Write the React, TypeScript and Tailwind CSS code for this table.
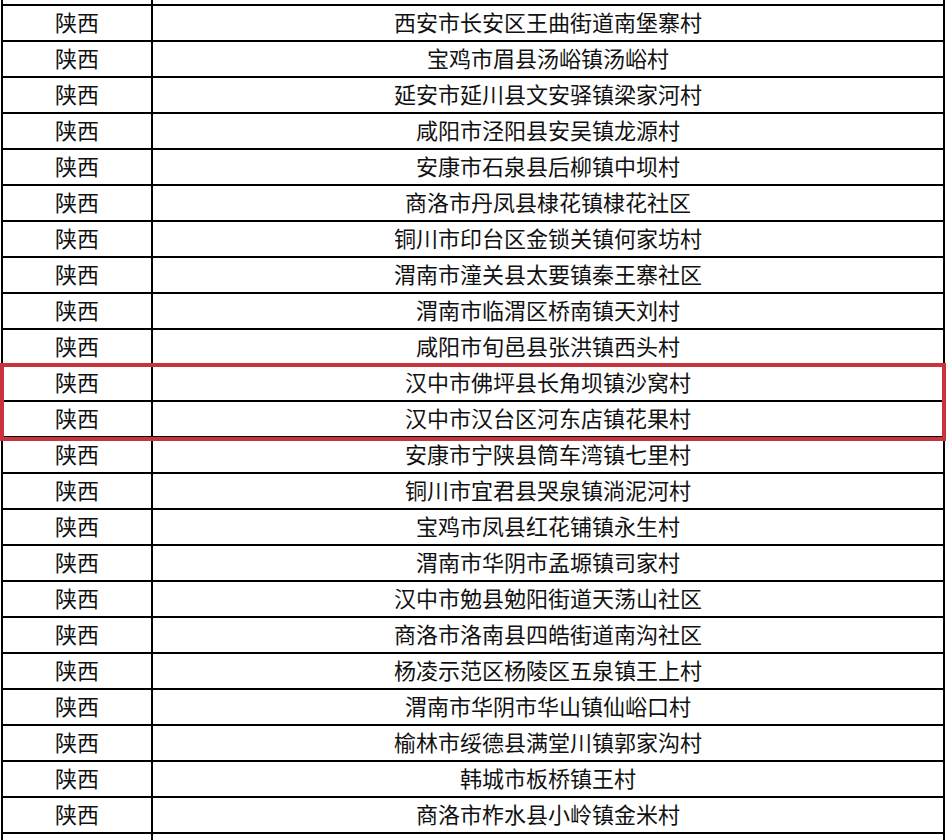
import React from "react";

const rows = [
  "西安市长安区王曲街道南堡寨村",
  "宝鸡市眉县汤峪镇汤峪村",
  "延安市延川县文安驿镇梁家河村",
  "咸阳市泾阳县安吴镇龙源村",
  "安康市石泉县后柳镇中坝村",
  "商洛市丹凤县棣花镇棣花社区",
  "铜川市印台区金锁关镇何家坊村",
  "渭南市潼关县太要镇秦王寨社区",
  "渭南市临渭区桥南镇天刘村",
  "咸阳市旬邑县张洪镇西头村",
  "汉中市佛坪县长角坝镇沙窝村",
  "汉中市汉台区河东店镇花果村",
  "安康市宁陕县筒车湾镇七里村",
  "铜川市宜君县哭泉镇淌泥河村",
  "宝鸡市凤县红花铺镇永生村",
  "渭南市华阴市孟塬镇司家村",
  "汉中市勉县勉阳街道天荡山社区",
  "商洛市洛南县四皓街道南沟社区",
  "杨凌示范区杨陵区五泉镇王上村",
  "渭南市华阴市华山镇仙峪口村",
  "榆林市绥德县满堂川镇郭家沟村",
  "韩城市板桥镇王村",
  "商洛市柞水县小岭镇金米村",
];

export default function App() {
  return (
    <div
      className="relative w-[952px] h-[840px] overflow-hidden bg-white text-[#111111]"
      style={{ fontFamily: '"Noto Sans CJK SC", "Noto Sans", sans-serif' }}
    >
      <div className="ml-[1px] w-[944px] border-x-2 border-black">
        <div className="flex h-[4px]">
          <div className="w-[150px] border-r-2 border-black" />
          <div className="flex-1" />
        </div>
        {rows.map((r, i) => (
          <div key={i} className="flex h-[36px] border-t-[2px] border-black text-[22px] leading-none">
            <div className="w-[150px] border-r-2 border-black flex items-center justify-center pb-[4px]">
              陕西
            </div>
            <div className="flex-1 flex items-center justify-center pb-[4px]">{r}</div>
          </div>
        ))}
        <div className="flex h-[36px] border-t-[2px] border-black">
          <div className="w-[150px] border-r-2 border-black" />
          <div className="flex-1" />
        </div>
      </div>
      <div className="absolute left-0 top-[363px] w-[946px] h-[78px] border-[4px] border-[#c8333c]" />
    </div>
  );
}
